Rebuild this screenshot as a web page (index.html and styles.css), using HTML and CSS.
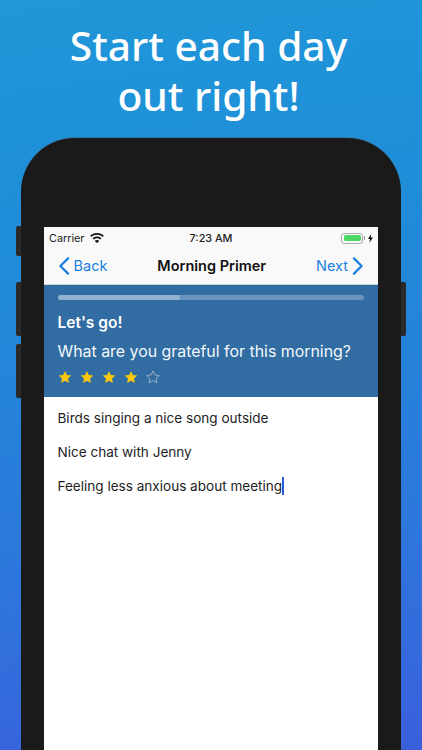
FILE: index.html
```html
<!DOCTYPE html>
<html lang="en">
<head>
<meta charset="utf-8">
<title>Morning Primer</title>
<link rel="stylesheet" href="styles.css">
</head>
<body>
<main class="poster">
  <h1 class="headline">Start each day<br>out right!</h1>
  <div class="phone">
    <span class="side side-mute"></span>
    <span class="side side-up"></span>
    <span class="side side-down"></span>
    <span class="side side-power"></span>
    <div class="screen">
      <div class="status">
        <div class="status-left">
          <span>Carrier</span>
          <svg class="wifi" viewBox="0 0 14 10" width="14" height="10"><path fill="#111" d="M7 0C4.300 0 2 1 .2 2.700l1.200 1.300C2.900 2.600 4.900 1.800 7 1.800s4.100.8 5.600 2.200l1.200-1.300C12 1 9.700 0 7 0zM7 3.500c-1.700 0-3.200.6-4.400 1.700l1.200 1.300C4.700 5.700 5.800 5.300 7 5.300s2.300.4 3.200 1.200l1.200-1.300C10.200 4.100 8.700 3.500 7 3.500zM7 7c-.9 0-1.700.3-2.300.9L7 10l2.300-2.100C8.700 7.300 7.900 7 7 7z"/></svg>
        </div>
        <span class="status-time">7:23 AM</span>
        <div class="status-right">
          <span class="battery"><span class="battery-fill"></span></span>
          <span class="battery-tip"></span>
          <svg class="bolt" viewBox="0 0 6 10" width="5" height="9"><path fill="#111" d="M3.800 0 0 5.700h2.300L1.700 10 6 3.900H3.400z"/></svg>
        </div>
      </div>
      <nav class="navbar">
        <a class="nav-link">
          <svg viewBox="0 0 12 20" width="12" height="18"><path fill="none" stroke="#1b7fe0" stroke-width="2.500" stroke-linecap="round" stroke-linejoin="round" d="M10.500 1.500 2 10l8.500 8.500"/></svg>
          <span>Back</span>
        </a>
        <span class="nav-title">Morning Primer</span>
        <a class="nav-link">
          <span>Next</span>
          <svg viewBox="0 0 12 20" width="12" height="18"><path fill="none" stroke="#1b7fe0" stroke-width="2.500" stroke-linecap="round" stroke-linejoin="round" d="M1.500 1.500 10 10l-8.500 8.500"/></svg>
        </a>
      </nav>
      <section class="prompt">
        <div class="progress"><div class="progress-fill"></div></div>
        <h2 class="prompt-title">Let's go!</h2>
        <p class="prompt-question">What are you grateful for this morning?</p>
        <div class="stars">
          <svg class="star" viewBox="0 0 24 24"><path class="star-on" d="M12 1.500l3.200 7.100 7.800.8-5.800 5.200 1.600 7.700L12 18.400l-6.800 3.900 1.600-7.700L1 9.400l7.800-.8z"/></svg>
          <svg class="star" viewBox="0 0 24 24"><path class="star-on" d="M12 1.500l3.200 7.100 7.800.8-5.800 5.200 1.600 7.700L12 18.400l-6.800 3.900 1.600-7.700L1 9.400l7.800-.8z"/></svg>
          <svg class="star" viewBox="0 0 24 24"><path class="star-on" d="M12 1.500l3.200 7.100 7.800.8-5.800 5.200 1.600 7.700L12 18.400l-6.800 3.900 1.600-7.700L1 9.400l7.800-.8z"/></svg>
          <svg class="star" viewBox="0 0 24 24"><path class="star-on" d="M12 1.500l3.200 7.100 7.800.8-5.800 5.200 1.600 7.700L12 18.400l-6.800 3.900 1.600-7.700L1 9.400l7.800-.8z"/></svg>
          <svg class="star" viewBox="0 0 24 24"><path class="star-off" d="M12 1.500l3.200 7.100 7.800.8-5.800 5.200 1.600 7.700L12 18.400l-6.800 3.900 1.600-7.700L1 9.400l7.800-.8z"/></svg>
        </div>
      </section>
      <div class="entries">
        <p class="entry">Birds singing a nice song outside</p>
        <p class="entry">Nice chat with Jenny</p>
        <p class="entry">Feeling less anxious about meeting<span class="caret"></span></p>
      </div>
    </div>
  </div>
</main>
</body>
</html>
```
FILE: styles.css
```css
* { box-sizing: border-box; }
html, body { margin: 0; padding: 0; height: 750px; overflow: hidden; }
body { font-family: Inter, "Liberation Sans", sans-serif; color: #111; }
.poster {
  height: 750px;
  overflow: hidden;
  display: flex;
  flex-direction: column;
  align-items: center;
  background: linear-gradient(172deg, #1f97d8 0%, #1f8dd8 30%, #2c78dc 70%, #3a5fdc 100%);
}
.headline {
  flex: none;
  margin: 0;
  padding: 20px 5px 0 0;
  height: 138px;
  font-family: "Noto Sans", sans-serif;
  font-weight: 500;
  font-size: 40.700px;
  line-height: 50px;
  color: #fff;
  text-align: center;
}
.phone {
  position: relative;
  flex: none;
  width: 380px;
  height: 612px;
  padding: 89px 23px 0;
  background: #1a1a1a;
  border-radius: 54px 54px 0 0;
  box-shadow: 0 -1px 0 rgba(60,110,150,.6);
}
.side { position: absolute; width: 5px; background: #2a2a2a; }
.side-mute { left: -5px; top: 88px; height: 30px; border-radius: 2px 0 0 2px; }
.side-up { left: -5px; top: 144px; height: 54px; border-radius: 2px 0 0 2px; }
.side-down { left: -5px; top: 206px; height: 54px; border-radius: 2px 0 0 2px; }
.side-power { right: -5px; top: 144px; height: 54px; border-radius: 0 2px 2px 0; }
.screen { width: 334px; height: 523px; background: #fff; }
.status {
  height: 22px;
  padding: 0 5px;
  display: grid;
  grid-template-columns: 1fr auto 1fr;
  align-items: center;
  background: #f9f9f9;
  font-size: 10.800px;
  font-weight: 400;
  color: #222;
}
.status-left { display: flex; align-items: center; gap: 6px; }
.status-time { font-weight: 500; }
.status-right { display: flex; align-items: center; justify-content: flex-end; }
.battery {
  width: 22px;
  height: 11px;
  padding: 1.500px;
  border: 1px solid #a8b0a8;
  border-radius: 3px;
  display: flex;
}
.battery-fill { flex: 1; background: #4cd964; border-radius: 1.500px; }
.battery-tip { width: 1px; height: 4px; margin-left: 1px; background: #9a9a9a; }
.bolt { margin-left: 3px; }
.navbar {
  height: 36px;
  padding: 0 14px 2px 13.500px;
  display: flex;
  align-items: center;
  justify-content: space-between;
  background: #f9f9f9;
  border-bottom: 1px solid #c9d4dc;
}
.nav-link { display: flex; align-items: center; gap: 4px; font-size: 14.500px; color: #1b7fe0; }
.nav-title { font-size: 14.500px; font-weight: 600; color: #111; }
.prompt {
  height: 112px;
  padding: 10px 14px 0 13.500px;
  background: #316da2;
  color: #fff;
}
.progress { height: 5px; border-radius: 3px; background: rgba(255,255,255,.28); }
.progress-fill { width: 40%; height: 100%; border-radius: 3px; background: rgba(255,255,255,.28); }
.prompt-title { margin: 13px 0 0; font-size: 15.500px; line-height: 20px; font-weight: 600; }
.prompt-question { margin: 9px 0 0; font-size: 15.900px; line-height: 20px; font-weight: 400; color: #f2f7fb; white-space: nowrap; }
.stars { margin-top: 8px; display: flex; gap: 8px; }
.star { width: 14px; height: 14px; }
.star-on { fill: #f9c80e; }
.star-off { fill: none; stroke: #9fb0c2; stroke-width: 1.600; }
.entries { padding: 11px 14px 0 13.500px; }
.entry { margin: 0 0 14px; font-size: 13.550px; line-height: 20px; color: #1d1d1d; white-space: nowrap; }
.caret { display: inline-block; width: 2px; height: 18px; vertical-align: -4px; background: #2a5bd7; }
```
